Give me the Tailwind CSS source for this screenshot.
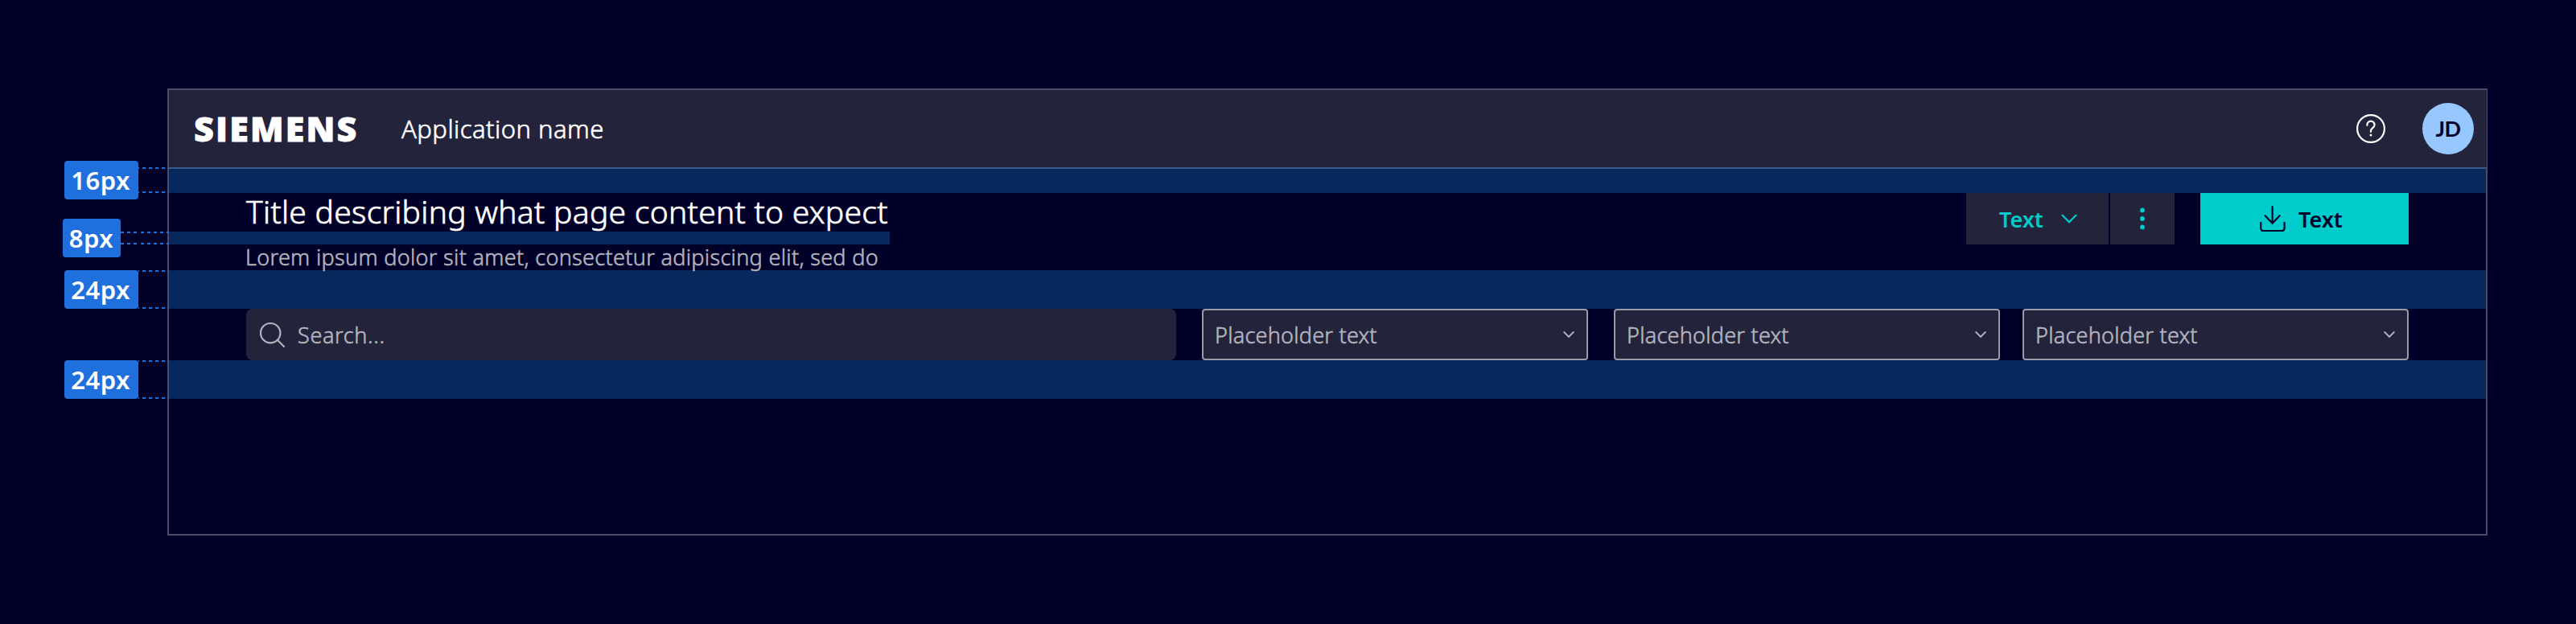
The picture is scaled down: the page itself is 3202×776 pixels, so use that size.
<!DOCTYPE html>
<html lang="en">
<head>
<meta charset="utf-8">
<title>Page header spacing</title>
<script src="https://cdn.jsdelivr.net/npm/@tailwindcss/browser@4"></script>
</head>
<body class="flex h-[776px] w-[3202px] overflow-hidden bg-[#000028] font-['Noto_Sans',sans-serif] text-white">

  <!-- Spacing annotations -->
  <aside class="z-10 -mr-[2px] flex w-[210px] shrink-0 flex-col pt-[200px] text-[31px] font-semibold tracking-[0.5px]">
    <div class="flex h-12 pl-20">
      <span class="flex w-[92px] items-center justify-center rounded bg-[#1f6fdd] pr-[2px] leading-none">16px</span>
      <span class="mt-2 flex h-8 w-[38px] flex-col justify-between">
        <i class="h-[2px] bg-[repeating-linear-gradient(90deg,#1f6fdd_0_1px,transparent_1px_5px,#1f6fdd_5px_8px)]"></i>
        <i class="h-[2px] bg-[repeating-linear-gradient(90deg,#1f6fdd_0_1px,transparent_1px_5px,#1f6fdd_5px_8px)]"></i>
      </span>
    </div>
    <div class="mt-6 flex h-12 pl-[78px]">
      <span class="flex w-[72px] items-center justify-center rounded bg-[#1f6fdd] pr-px leading-none">8px</span>
      <span class="mt-4 flex h-4 w-[60px] flex-col justify-between">
        <i class="h-[2px] bg-[repeating-linear-gradient(90deg,#1f6fdd_0_4px,transparent_4px_8.2px)]"></i>
        <i class="h-[2px] bg-[repeating-linear-gradient(90deg,#1f6fdd_0_4px,transparent_4px_8.2px)]"></i>
      </span>
    </div>
    <div class="mt-4 flex h-12 pl-20">
      <span class="flex w-[92px] items-center justify-center rounded bg-[#1f6fdd] pr-[2px] leading-none">24px</span>
      <span class="flex h-12 w-[38px] flex-col justify-between">
        <i class="h-[2px] bg-[repeating-linear-gradient(90deg,#1f6fdd_0_1px,transparent_1px_5px,#1f6fdd_5px_8px)]"></i>
        <i class="h-[2px] bg-[repeating-linear-gradient(90deg,#1f6fdd_0_1px,transparent_1px_5px,#1f6fdd_5px_8px)]"></i>
      </span>
    </div>
    <div class="mt-16 flex h-12 pl-20">
      <span class="flex w-[92px] items-center justify-center rounded bg-[#1f6fdd] pr-[2px] leading-none">24px</span>
      <span class="flex h-12 w-[38px] flex-col justify-between">
        <i class="h-[2px] bg-[repeating-linear-gradient(90deg,#1f6fdd_0_1px,transparent_1px_5px,#1f6fdd_5px_8px)]"></i>
        <i class="h-[2px] bg-[repeating-linear-gradient(90deg,#1f6fdd_0_1px,transparent_1px_5px,#1f6fdd_5px_8px)]"></i>
      </span>
    </div>
  </aside>

  <!-- Application frame -->
  <div class="mt-[110px] h-[556px] w-[2884px] shrink-0 border-2 border-[#4c4c68]">
    <header class="-mr-px flex h-24 items-center bg-[#23233c]">
      <span class="ml-[31px] w-[258px] pb-[2px] font-['Open_Sans',sans-serif] text-[43px] leading-none font-extrabold tracking-[2.2px] [-webkit-text-stroke:0.8px_white]">SIEMENS</span>
      <span class="text-[31px] leading-none font-light tracking-[0.47px] [-webkit-text-stroke:0.6px_white]">Application name</span>
      <svg class="ml-auto size-9" viewBox="0 0 36 36" fill="none" stroke="#fff" stroke-width="2.2" stroke-linecap="round">
        <circle cx="18" cy="18" r="16.9"/>
        <path d="M13.4 13.8v-.6a4.6 4.6 0 0 1 9.2 0c0 3.6-4.6 4.2-4.6 7.6v1"/>
        <circle cx="18" cy="26" r="1.5" fill="#fff" stroke="none"/>
      </svg>
      <span class="mr-4 ml-[46px] flex size-16 items-center justify-center rounded-full bg-[#97c7ff] pb-px font-['Lato',sans-serif] text-[27px] leading-none font-bold tracking-[-0.5px] text-[#000028]">JD</span>
    </header>

    <div class="h-8 border-t-2 border-[#3c5b8c] bg-[#06285c]"></div>

    <div class="flex h-24 justify-between pr-24">
      <div class="w-[896px]">
        <h1 class="h-12 pl-24 text-[39px] leading-[46px] font-light tracking-[0.3px] whitespace-nowrap [-webkit-text-stroke:0.7px_white]">Title describing what page content to expect</h1>
        <div class="h-4 bg-[#06285c]"></div>
        <p class="h-8 pl-[95px] text-[27px] leading-8 font-light tracking-[0.32px] whitespace-nowrap text-[#b3b3be] [-webkit-text-stroke:0.6px_#b3b3be]">Lorem ipsum dolor sit amet, consectetur adipiscing elit, sed do</p>
      </div>
      <div class="flex h-16 text-[27px] leading-none font-semibold">
        <button class="flex w-[177px] items-center bg-[#23233c] pl-[41px] text-[#00cccc]">
          <span class="w-[77px] text-left">Text</span>
          <svg class="h-3 w-5" viewBox="0 0 20 12" fill="none" stroke="#00cccc" stroke-width="2.3" stroke-linecap="round"><path d="M1.6 1.7 10 10.2l8.4-8.5"/></svg>
        </button>
        <button class="ml-[2px] flex w-20 items-center justify-center bg-[#23233c]">
          <svg class="h-7 w-2" viewBox="0 0 8 28" fill="#00cccc"><circle cx="4" cy="3.4" r="2.9"/><circle cx="4" cy="13.9" r="2.9"/><circle cx="4" cy="24.4" r="2.9"/></svg>
        </button>
        <button class="ml-8 flex w-[259px] items-center bg-[#00cccc] pl-[74px] text-[#000028]">
          <svg class="size-8" viewBox="0 0 32 32" fill="none" stroke="#000028" stroke-width="2.2" stroke-linecap="round"><path d="M15.6 1.2v20.4M6.6 12.2l9 9.4 9-9.4M1.2 20.8v7.2a3 3 0 0 0 3 3h23.4a3 3 0 0 0 3-3v-7.2"/></svg>
          <span class="ml-4">Text</span>
        </button>
      </div>
    </div>

    <div class="h-12 bg-[#06285c]"></div>

    <div class="flex h-16 pl-24 text-[27px] leading-none font-light tracking-[0.25px] text-[#b3b3be] [-webkit-text-stroke:0.6px_#b3b3be]">
      <div class="flex w-[1156px] items-center rounded-lg bg-[#23233c] pl-4">
        <svg class="size-8" viewBox="0 0 32 32" fill="none" stroke="#b3b3be" stroke-width="2.2" stroke-linecap="round"><circle cx="14.2" cy="14.2" r="12.2"/><path d="m23 23 8 8"/></svg>
        <span class="ml-4 tracking-[0.65px]">Search...</span>
      </div>
      <div class="ml-8 flex w-[480px] items-center justify-between rounded border-2 border-[#9999a9] bg-[#23233c] pr-[15px] pl-[14px]">
        <span>Placeholder text</span>
        <svg class="h-[10px] w-[14px]" viewBox="0 0 14 10" fill="none" stroke="#b3b3be" stroke-width="1.8" stroke-linecap="round"><path d="M1.2 2 7 8l5.800-6"/></svg>
      </div>
      <div class="ml-8 flex w-[480px] items-center justify-between rounded border-2 border-[#9999a9] bg-[#23233c] pr-[15px] pl-[14px]">
        <span>Placeholder text</span>
        <svg class="h-[10px] w-[14px]" viewBox="0 0 14 10" fill="none" stroke="#b3b3be" stroke-width="1.8" stroke-linecap="round"><path d="M1.2 2 7 8l5.800-6"/></svg>
      </div>
      <div class="ml-7 flex w-[480px] items-center justify-between rounded border-2 border-[#9999a9] bg-[#23233c] pr-[15px] pl-[14px]">
        <span>Placeholder text</span>
        <svg class="h-[10px] w-[14px]" viewBox="0 0 14 10" fill="none" stroke="#b3b3be" stroke-width="1.8" stroke-linecap="round"><path d="M1.2 2 7 8l5.800-6"/></svg>
      </div>
    </div>

    <div class="h-12 bg-[#06285c]"></div>
  </div>
</body>
</html>
